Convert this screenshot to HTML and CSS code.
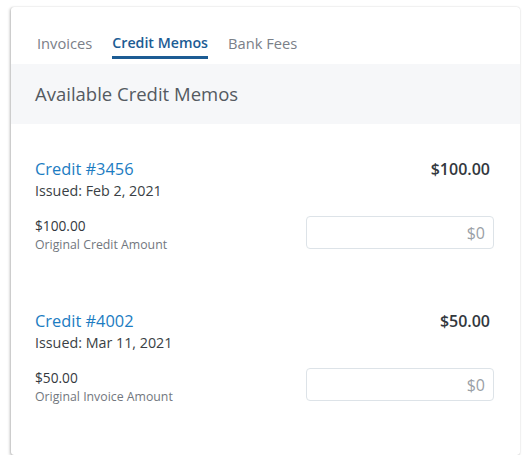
FILE: index.html
```html
<!DOCTYPE html>
<html>
<head>
<meta charset="utf-8">
<link rel="stylesheet" href="styles.css">
</head>
<body>
<div class="card">
  <nav class="tabs">
    <span class="tab">Invoices</span>
    <span class="tab active">Credit Memos</span>
    <span class="tab">Bank Fees</span>
  </nav>
  <div class="band">Available Credit Memos</div>
  <div class="items">
    <div class="item">
      <div class="row top">
        <div>
          <div class="credit">Credit #3456</div>
          <div class="issued">Issued: Feb 2, 2021</div>
        </div>
        <div class="amount">$100.00</div>
      </div>
      <div class="row bottom">
        <div>
          <div class="orig">$100.00</div>
          <div class="label">Original Credit Amount</div>
        </div>
        <div class="input"><span>$0</span></div>
      </div>
    </div>
    <div class="item">
      <div class="row top">
        <div>
          <div class="credit">Credit #4002</div>
          <div class="issued">Issued: Mar 11, 2021</div>
        </div>
        <div class="amount">$50.00</div>
      </div>
      <div class="row bottom">
        <div>
          <div class="orig">$50.00</div>
          <div class="label">Original Invoice Amount</div>
        </div>
        <div class="input"><span>$0</span></div>
      </div>
    </div>
  </div>
</div>
</body>
</html>
```
FILE: styles.css
```css
* { box-sizing: border-box; }
body {
  margin: 0;
  background: #fff;
  font-family: "Open Sans", "Liberation Sans", sans-serif;
}
.card {
  margin: 7px 0 0 11px;
  width: 509px;
  height: 448px;
  background: #fff;
  border-radius: 3px;
  box-shadow: -1px 1px 3px rgba(0,0,0,0.28), 0 0 1px rgba(0,0,0,0.2);
}
.tabs {
  display: flex;
  gap: 20px;
  padding: 26px 0 0 26px;
  height: 57px;
}
.tab {
  font-size: 14.7px;
  line-height: 20px;
  color: #7b8088;
  height: 26px;
}
.active {
  font-size: 14.2px;
  font-weight: 600;
  color: #1c5c94;
  border-bottom: 3px solid #1c5c94;
}
.band {
  background: #f6f7f9;
  height: 60px;
  line-height: 60px;
  padding-left: 24px;
  font-size: 18.5px;
  color: #545a61;
}
.items {
  padding: 34px 26px 0 24px;
  display: flex;
  flex-direction: column;
  gap: 56px;
}
.row {
  display: flex;
  justify-content: space-between;
}
.credit {
  font-size: 16.4px;
  line-height: 22px;
  color: #1c7cc2;
}
.issued {
  font-size: 14.3px;
  line-height: 21px;
  color: #3a3f45;
}
.amount {
  font-size: 16px;
  font-weight: 600;
  line-height: 22px;
  color: #33383e;
  padding-right: 4px;
}
.bottom { margin-top: 15px; }
.orig {
  font-size: 13.7px;
  line-height: 20px;
  color: #33383e;
}
.label {
  font-size: 12.3px;
  line-height: 18px;
  color: #72777e;
}
.input {
  width: 188px;
  height: 33px;
  border: 1px solid #dde3e8;
  border-radius: 4px;
  display: flex;
  align-items: center;
  justify-content: flex-end;
  padding-right: 8px;
  font-size: 16px;
  color: #9aa0a6;
}
```
